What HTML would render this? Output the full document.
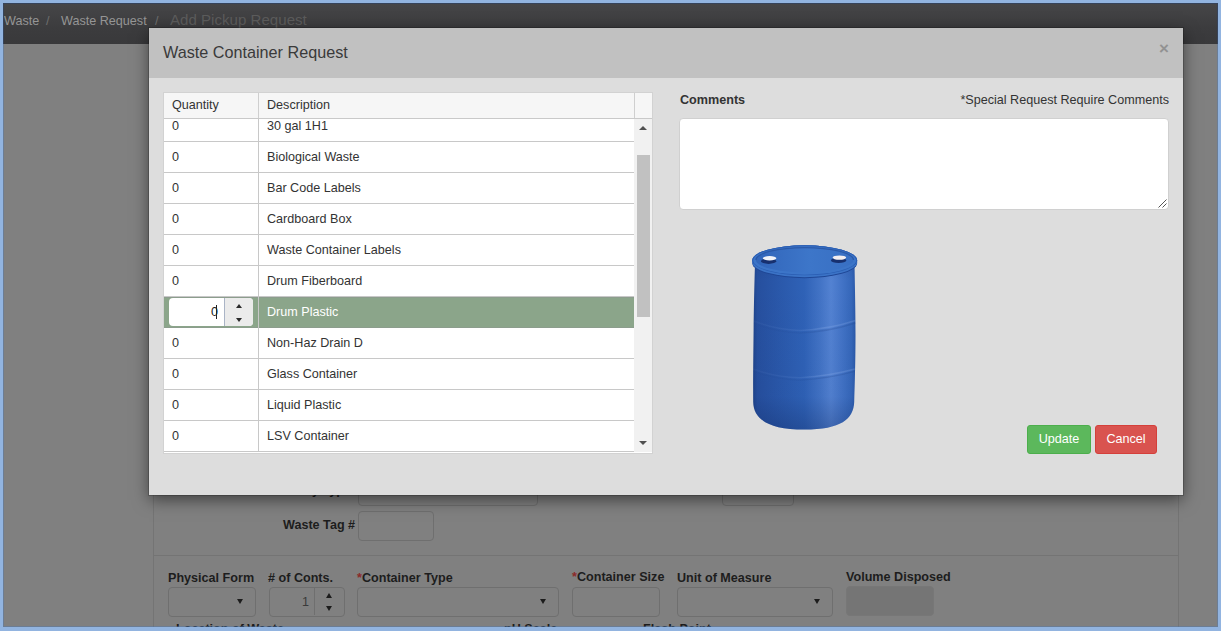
<!DOCTYPE html>
<html><head><meta charset="utf-8"><title>Waste Container Request</title>
<style>
*{box-sizing:border-box;margin:0;padding:0}
html,body{width:1221px;height:631px;overflow:hidden}
body{position:relative;background:#808080;font-family:"Liberation Sans",Arial,Helvetica,sans-serif;font-size:14px;color:#333}
.abs{position:absolute}
#frame{position:absolute;left:0;top:0;width:1221px;height:631px;border:3px solid #92b4e0;border-bottom-width:4px;z-index:50;pointer-events:none}
#frame:after{content:"";position:absolute;left:0;top:0;right:0;bottom:0;border:1px solid rgba(83,121,175,.45)}
#nav{left:3px;top:3px;width:1215px;height:41px;background:linear-gradient(#464648,#3c3c3e 60%,#39393b)}
#nav span{position:absolute;top:9px;font-size:12.6px;line-height:18px;white-space:nowrap}
.lbl{position:absolute;font-weight:bold;font-size:12.6px;line-height:16px;color:#1d1d1d;white-space:nowrap}
.box{position:absolute;border:1px solid #6f6f6f;border-radius:4px;background:#808080}
.red{color:#8c2a2a}
/* modal */
#modal{left:149px;top:28px;width:1034px;height:467px;background:#dddddd;box-shadow:0 0 0 1px rgba(0,0,0,.18),0 5px 15px rgba(0,0,0,.5)}
#mhead{left:0;top:0;width:1034px;height:50px;background:#c1c1c1}
#mtitle{left:14px;top:14px;font-size:16.2px;line-height:20px;color:#3a3a3a}
#grid{left:14px;top:64px;width:490px;height:362px;background:#fff;overflow:hidden}
.row{position:absolute;left:0;width:470px;height:31px;border-bottom:1px solid #ccc}
.row .q{position:absolute;left:8px;top:6px;line-height:18px}
.row .d{position:absolute;left:103px;top:6px;line-height:18px}

#grid{font-size:12.6px;color:#333;border:1px solid #d2d2d2}
.ghead{left:0;top:0;width:488px;height:26px;background:#f6f6f6;border-bottom:1px solid #c9c9c9}
.ghead span{position:absolute;top:4px;line-height:16px}
.ghead .hd{position:absolute;top:0;width:1px;height:25px;background:#cfcfcf}
.gbody{left:0;top:26px;width:488px;height:333px;overflow:hidden;background:#fff}
.row{position:absolute;left:0;width:470px;height:31px;border-bottom:1px solid #c8c8c8}
.row .q{position:absolute;left:8px;top:7px;line-height:16px}
.row .d{position:absolute;left:103px;top:7px;line-height:16px}
.row.sel{background:#8ba58a;color:#fff;border-bottom-color:#8c9d8d;box-shadow:inset 0 1px 0 #8c9d8d}
.coldiv{position:absolute;left:94px;top:0;width:1px;height:333px;background:#c8c8c8}
.num{position:absolute;left:5px;top:1px;width:84px;height:28px;background:#fff;border-radius:4px;overflow:hidden}
.num .nv{position:absolute;right:35px;top:6px;line-height:16px;color:#222}
.num .cur{position:absolute;left:47px;top:7px;width:1px;height:14px;background:#222}
.spin{position:absolute;left:55px;top:0;width:29px;height:28px;background:#ebebeb;border-left:1px solid #aab4c6}
.up,.dn,.sup,.sdn{position:absolute;width:0;height:0;border-left:4px solid transparent;border-right:4px solid transparent}
.up{left:11px;top:6px;border-left-width:3.5px;border-right-width:3.5px;border-bottom:4.5px solid #2a2a2a}
.dn{left:11px;top:19.5px;border-left-width:3.5px;border-right-width:3.5px;border-top:4.5px solid #2a2a2a}
.sbar{position:absolute;left:470px;top:0;width:18px;height:333px;background:#f1f1f1}
.sbar .thumb{position:absolute;left:3px;top:36px;width:13px;height:162px;background:#c1c1c1}
.sup{left:5px;top:7px;border-bottom:4px solid #505050}
.sdn{left:5px;top:322px;border-top:4px solid #505050}
#cm{left:531px;top:64px;font-weight:bold;font-size:12.6px;line-height:16px;color:#333}
#sp{right:14px;top:64px;font-size:12.6px;line-height:16px;color:#333;white-space:nowrap}
#ta{left:530px;top:90px;width:490px;height:92px;background:#fff;border:1px solid #d0d0d0;border-radius:4px}
.btn{position:absolute;top:397px;height:29px;border-radius:3px;color:#fff;font-size:12.6px;line-height:27px;text-align:center;border:1px solid}
.darr,.uarr{width:0;height:0;border-left:3.75px solid transparent;border-right:3.75px solid transparent}
.darr{border-top:5px solid #1c1c1c}.uarr{border-bottom:5px solid #1c1c1c}
</style></head><body>
<div id="nav" class="abs">
<span style="left:1px;color:#959595">Waste</span><span style="left:43px;color:#6e6e6e">/</span><span style="left:58px;color:#959595">Waste Request</span><span style="left:152px;color:#6e6e6e">/</span><span style="left:167px;top:8px;color:#5c5c5c;font-size:15.1px">Add Pickup Request</span>
</div>

<!-- background page -->
<div class="abs" style="left:153px;top:44px;width:1026px;height:600px;border-left:1px solid #747474;border-right:1px solid #747474"></div>
<div class="abs" style="left:153px;top:555px;width:1026px;height:1px;background:#747474"></div>
<div class="lbl" style="right:870px;top:482px">Activity Type</div>
<div class="lbl" style="left:283px;top:517px">Waste Tag #</div>
<div class="box" style="left:358px;top:511px;width:76px;height:30px"></div>
<div class="box" style="left:358px;top:476px;width:180px;height:30px"></div>
<div class="box" style="left:722px;top:476px;width:72px;height:30px"></div>

<div class="lbl" style="left:168px;top:570px">Physical Form</div>
<div class="box" style="left:168px;top:587px;width:88px;height:30px"></div>
<div class="lbl" style="left:268px;top:570px"># of Conts.</div>
<div class="box" style="left:269px;top:587px;width:76px;height:30px"></div>
<div class="lbl" style="left:357px;top:570px"><span class="red">*</span>Container Type</div>
<div class="box" style="left:357px;top:587px;width:202px;height:30px"></div>
<div class="lbl" style="left:572px;top:569px"><span class="red">*</span>Container Size</div>
<div class="box" style="left:572px;top:587px;width:88px;height:30px"></div>
<div class="lbl" style="left:677px;top:570px">Unit of Measure</div>
<div class="box" style="left:677px;top:587px;width:156px;height:30px"></div>
<div class="lbl" style="left:846px;top:569px">Volume Disposed</div>
<div class="box" style="left:846px;top:586px;width:88px;height:30px;background:#757575;border-color:#777"></div>
<div class="abs darr" style="left:237px;top:599px"></div>
<div class="abs darr" style="left:540px;top:599px"></div>
<div class="abs darr" style="left:814px;top:599px"></div>
<div class="abs" style="left:314px;top:588px;width:1px;height:27px;background:#6f6f6f"></div>
<div class="abs" style="left:302px;top:594px;font-size:12.6px;line-height:16px;color:#3a3a3a">1</div>
<div class="abs uarr" style="left:326px;top:593px"></div>
<div class="abs darr" style="left:326px;top:606px"></div>
<div class="lbl" style="left:176px;top:621px">Location of Waste</div>
<div class="lbl" style="left:504px;top:621px">pH Scale</div>
<div class="lbl" style="left:643px;top:621px">Flash Point</div>

<!-- modal -->
<div id="modal" class="abs">
 <div id="mhead" class="abs"><div id="mtitle" class="abs">Waste Container Request</div>
 <div class="abs" style="left:1010px;top:11px;font-size:17px;font-weight:bold;color:#929292;line-height:20px">×</div></div>
 <div id="grid" class="abs">
<div class="ghead abs"><span style="left:8px">Quantity</span><span style="left:103px">Description</span><i class="hd" style="left:94px"></i><i class="hd" style="left:470px"></i></div>
 <div class="gbody abs">
  <div class="row" style="top:-8px"><span class="q">0</span><span class="d">30 gal 1H1</span></div>
  <div class="row" style="top:23px"><span class="q">0</span><span class="d">Biological Waste</span></div>
  <div class="row" style="top:54px"><span class="q">0</span><span class="d">Bar Code Labels</span></div>
  <div class="row" style="top:85px"><span class="q">0</span><span class="d">Cardboard Box</span></div>
  <div class="row" style="top:116px"><span class="q">0</span><span class="d">Waste Container Labels</span></div>
  <div class="row" style="top:147px"><span class="q">0</span><span class="d">Drum Fiberboard</span></div>
  <div class="row sel" style="top:178px"><div class="qc"></div><div class="num"><span class="nv">0</span><i class="cur"></i><div class="spin"><i class="up"></i><i class="dn"></i></div></div><span class="d">Drum Plastic</span></div>
  <div class="row" style="top:209px"><span class="q">0</span><span class="d">Non-Haz Drain D</span></div>
  <div class="row" style="top:240px"><span class="q">0</span><span class="d">Glass Container</span></div>
  <div class="row" style="top:271px"><span class="q">0</span><span class="d">Liquid Plastic</span></div>
  <div class="row" style="top:302px"><span class="q">0</span><span class="d">LSV Container</span></div>
  <div class="coldiv"></div>
  <div class="sbar"><i class="sup"></i><i class="thumb"></i><i class="sdn"></i></div>
 </div>
 </div>
 <div id="cm" class="abs">Comments</div>
 <div id="sp" class="abs">*Special Request Require Comments</div>
 <div id="ta" class="abs"><svg class="abs" style="right:1px;bottom:1px" width="10" height="10" viewBox="0 0 10 10"><path d="M9.5 1.5L1.5 9.5M9.5 5.5L5.5 9.5" stroke="#555" stroke-width="1" fill="none"/></svg></div>
<svg class="abs" style="left:596px;top:210px" width="120" height="200" viewBox="745 238 120 200">
  <defs>
   <linearGradient id="gb" x1="0" y1="0" x2="1" y2="0">
    <stop offset="0" stop-color="#1e438a"/><stop offset=".04" stop-color="#264f9e"/><stop offset=".25" stop-color="#2a58aa"/>
    <stop offset=".5" stop-color="#2f62b7"/><stop offset=".66" stop-color="#4374c6"/><stop offset=".76" stop-color="#5382d2"/><stop offset=".87" stop-color="#4273c6"/>
    <stop offset=".96" stop-color="#3567ba"/><stop offset="1" stop-color="#2a58a8"/>
   </linearGradient>
   <linearGradient id="gv" x1="0" y1="0" x2="0" y2="1">
    <stop offset="0" stop-color="#0a1d50" stop-opacity=".08"/><stop offset=".1" stop-color="#0a1d50" stop-opacity="0"/><stop offset=".8" stop-color="#0a1d50" stop-opacity=".04"/><stop offset="1" stop-color="#0a1d50" stop-opacity=".28"/>
   </linearGradient>
   <linearGradient id="gt" x1="0" y1="0" x2="1" y2="0">
    <stop offset="0" stop-color="#3165ba"/><stop offset=".55" stop-color="#3d76c9"/><stop offset="1" stop-color="#386fc3"/>
   </linearGradient>
   <linearGradient id="rl" gradientUnits="userSpaceOnUse" x1="753" y1="0" x2="856" y2="0">
    <stop offset="0" stop-color="#86a9e6" stop-opacity=".05"/><stop offset=".45" stop-color="#86a9e6" stop-opacity=".12"/><stop offset=".7" stop-color="#86a9e6" stop-opacity=".32"/><stop offset="1" stop-color="#86a9e6" stop-opacity=".24"/>
   </linearGradient>
   <linearGradient id="rd" gradientUnits="userSpaceOnUse" x1="753" y1="0" x2="856" y2="0">
    <stop offset="0" stop-color="#173a80" stop-opacity=".05"/><stop offset=".45" stop-color="#173a80" stop-opacity=".1"/><stop offset=".7" stop-color="#173a80" stop-opacity=".22"/><stop offset="1" stop-color="#173a80" stop-opacity=".18"/>
   </linearGradient>
  </defs>
  <path d="M755 264 C754.2 290 753.8 310 753.6 330 C753.3 360 753 385 753.2 402 C753.6 419 768 429.6 804.5 429.6 C841 429.6 853.6 419 854.2 402 C854.8 385 855.5 360 855.5 335 C855.5 310 855 290 854.5 264 Z" fill="url(#gb)"/>
  <path d="M755 264 C754.2 290 753.8 310 753.6 330 C753.3 360 753 385 753.2 402 C753.6 419 768 429.6 804.5 429.6 C841 429.6 853.6 419 854.2 402 C854.8 385 855.5 360 855.5 335 C855.5 310 855 290 854.5 264 Z" fill="url(#gv)"/>
  <path d="M753.7 321 Q775 329.5 800 330.5 Q830 329 855.4 320.5" stroke="url(#rl)" stroke-width="1.4" fill="none"/>
  <path d="M753.7 323.4 Q775 332 800 333 Q830 331.5 855.4 323" stroke="url(#rd)" stroke-width="1.4" fill="none"/>
  <path d="M753.2 369 Q775 377 800 377.8 Q830 376 854.8 369" stroke="url(#rl)" stroke-width="1.4" fill="none"/>
  <path d="M753.2 371.4 Q775 379.4 800 380.2 Q830 378.4 854.8 371.4" stroke="url(#rd)" stroke-width="1.4" fill="none"/>
  <!-- rim -->
  <path d="M752.3 260.3 A52.4 15 0 0 1 857.1 260.3 L857.1 263.2 A52.4 15 0 0 1 752.3 263.2 Z" fill="#1f4796"/>
  <path d="M752.3 260.3 A52.4 15 0 0 1 857.1 260.3 L857.1 262.2 A52.4 15 0 0 1 752.3 262.2 Z" fill="#3b73c6"/>
  <ellipse cx="804.7" cy="260.3" rx="52.4" ry="15" fill="#2a5db2"/>
  <ellipse cx="804.7" cy="260.5" rx="51.4" ry="14.2" fill="#3c75c8"/>
  <ellipse cx="804.7" cy="260" rx="48.8" ry="12.4" fill="url(#gt)"/>
  <path d="M755.9 260 A48.8 12.4 0 0 1 853.5 260" fill="none" stroke="#234e9d" stroke-width="1.3" stroke-opacity=".7"/>
  <!-- caps -->
  <ellipse cx="768.6" cy="261.2" rx="7.6" ry="2.7" fill="#17306f"/>
  <ellipse cx="769.6" cy="258.3" rx="6.8" ry="2.2" fill="#f0f2f8"/>
  <ellipse cx="838.6" cy="260.4" rx="7.6" ry="2.7" fill="#17306f"/>
  <ellipse cx="839.4" cy="257.6" rx="6.8" ry="2.2" fill="#f3eef0"/>
 </svg>
 <div class="btn" style="left:878px;width:64px;background:#5cb85c;border-color:#4cae4c">Update</div>
 <div class="btn" style="left:946px;width:62px;background:#d9534f;border-color:#d43f3a">Cancel</div>

</div>

<div id="frame"></div>
<div class="abs" style="left:3px;top:3px;width:1215px;height:41px;border:1px solid #36435a;border-bottom:none;z-index:51"></div>
</body></html>
